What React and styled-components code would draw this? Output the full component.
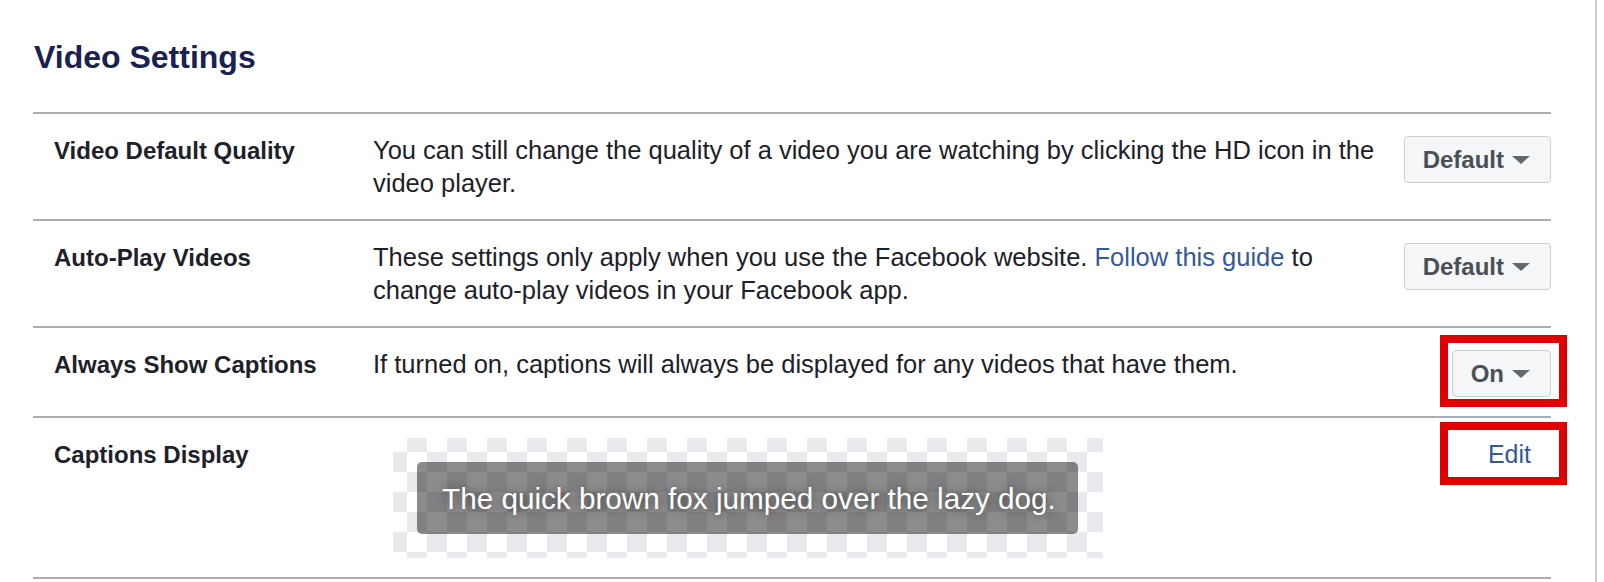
import styled, { createGlobalStyle } from 'styled-components';

const GlobalStyle = createGlobalStyle`
  body {
    margin: 0;
    background: #fff;
    font-family: "Liberation Sans", Arial, sans-serif;
    color: #1d2129;
  }
`;

const Page = styled.div`
  display: flex;
  min-height: 582px;
`;

const Panel = styled.div`
  box-sizing: border-box;
  width: 1597px;
  padding: 37px 44px 0 33px;
  border-right: 2px solid #cdcdcd;
`;

const Title = styled.h2`
  margin: 0 0 35px 1px;
  font-size: 32px;
  line-height: 40px;
  font-weight: bold;
  color: #1b2150;
`;

const SettingsList = styled.div`
  border-top: 2px solid #adadad;
`;

const Row = styled.div`
  display: grid;
  grid-template-columns: 299px minmax(0, 1fr) auto;
  column-gap: 20px;
  align-items: start;
  padding: 20px 0 19px 21px;
  border-bottom: 2px solid #adadad;
`;

const Label = styled.div`
  font-size: 24px;
  line-height: 33px;
  font-weight: bold;
  color: #1d2129;
`;

const Description = styled.div`
  font-size: 25.5px;
  line-height: 33px;
  color: #1d2129;
`;

const Link = styled.a`
  color: #365899;
  text-decoration: none;
`;

const Control = styled.div`
  display: flex;
  justify-content: flex-end;
`;

const Marker = styled.div`
  position: relative;
  display: flex;

  ${p =>
    p.$active &&
    `
    &::after {
      content: '';
      position: absolute;
      inset: ${p.$inset};
      border: 8px solid #e10000;
      pointer-events: none;
    }
  `}
`;

const SelectButton = styled.button`
  display: inline-flex;
  align-items: center;
  gap: 8px;
  box-sizing: border-box;
  height: 47px;
  margin-top: 2px;
  padding: 0 20px 0 18px;
  background: #f5f6f7;
  border: 1px solid #ccd0d5;
  border-radius: 4px;
  font-family: "Liberation Sans", Arial, sans-serif;
  font-size: 24px;
  font-weight: bold;
  color: #4b4f56;
`;

const Caret = styled.span`
  width: 0;
  height: 0;
  border-left: 9px solid transparent;
  border-right: 9px solid transparent;
  border-top: 8px solid #606770;
`;

const EditLink = styled.a`
  margin-right: 20px;
  font-size: 25px;
  line-height: 33px;
  color: #365899;
  text-decoration: none;
`;

const Preview = styled.div`
  box-sizing: border-box;
  width: 710px;
  height: 120px;
  margin-left: 20px;
  padding: 24px;
  background: repeating-conic-gradient(#e9eaed 0 25%, #fff 0 50%) -6px -6px / 40px 40px;
`;

const CaptionBox = styled.div`
  display: inline-flex;
  align-items: center;
  height: 72px;
  padding: 0 22px 0 25px;
  border-radius: 5px;
  background: rgba(0, 0, 0, 0.45);
  color: #fff;
  font-size: 29.7px;
  white-space: nowrap;
  text-shadow: 0 0 10px rgba(0, 0, 0, 0.55);
`;

const settings = [
  {
    label: 'Video Default Quality',
    description:
      'You can still change the quality of a video you are watching by clicking the HD icon in the video player.',
    control: 'Default'
  },
  {
    label: 'Auto-Play Videos',
    description: (
      <>
        These settings only apply when you use the Facebook website.{' '}
        <Link href="#">Follow this guide</Link> to change auto-play videos in
        your Facebook app.
      </>
    ),
    control: 'Default'
  },
  {
    label: 'Always Show Captions',
    description:
      'If turned on, captions will always be displayed for any videos that have them.',
    control: 'On',
    marked: true
  }
];

const App = () => {
  return (
    <Page>
      <GlobalStyle />
      <Panel>
        <Title>Video Settings</Title>
        <SettingsList>
          {settings.map(item => (
            <Row key={item.label}>
              <Label>{item.label}</Label>
              <Description>{item.description}</Description>
              <Control>
                <Marker $active={item.marked} $inset="-13px -16px -10px -12px">
                  <SelectButton>
                    {item.control}
                    <Caret />
                  </SelectButton>
                </Marker>
              </Control>
            </Row>
          ))}
          <Row>
            <Label>Captions Display</Label>
            <Description>
              <Preview>
                <CaptionBox>The quick brown fox jumped over the lazy dog.</CaptionBox>
              </Preview>
            </Description>
            <Control>
              <Marker $active $inset="-16px -16px -14px -48px">
                <EditLink href="#">Edit</EditLink>
              </Marker>
            </Control>
          </Row>
        </SettingsList>
      </Panel>
    </Page>
  );
};

export default App;
